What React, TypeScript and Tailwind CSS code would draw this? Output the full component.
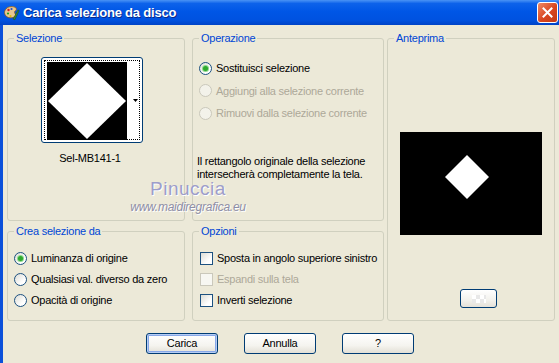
import clsx from "clsx";

const font = "font-['Liberation_Sans',Arial,sans-serif]";

const Radio = ({ label, checked, disabled, h }: { label: string; checked?: boolean; disabled?: boolean; h: string }) => (
  <div className={clsx("flex items-center", h)}>
    <span
      className={clsx(
        "w-[13px] h-[13px] rounded-full border flex items-center justify-center shrink-0",
        disabled ? "border-[#cac8bb] bg-[#f3f2ea]" : "border-[#1c5180] bg-[linear-gradient(135deg,#dcdcd5,#ffffff_70%)]"
      )}
    >
      {checked && <span className="w-[5px] h-[5px] rounded-full bg-[#2fa92f] shadow-[0_0_0_1px_#8fd98f]" />}
    </span>
    <span className={clsx("ml-[4px] whitespace-nowrap", disabled ? "text-[#aca899]" : "text-black")}>{label}</span>
  </div>
);

const Check = ({ label, disabled }: { label: string; disabled?: boolean }) => (
  <div className="flex items-center h-[21px]">
    <span
      className={clsx(
        "w-[13px] h-[13px] border shrink-0",
        disabled ? "border-[#cac8bb] bg-[#f7f7f2]" : "border-[#1c5180] bg-[linear-gradient(135deg,#dcdcd5,#ffffff_70%)]"
      )}
    />
    <span className={clsx("ml-[4px] whitespace-nowrap", disabled ? "text-[#aca899]" : "text-black")}>{label}</span>
  </div>
);

const Group = ({ title, className, children }: { title: string; className: string; children?: React.ReactNode }) => (
  <fieldset className={clsx("border border-[#d0d0bf] rounded-[3px]", className)}>
    <legend className="ml-[6px] px-[2px] text-[#0046d5] leading-[13px]">{title}</legend>
    {children}
  </fieldset>
);

const XpButton = ({ label, isDefault }: { label: string; isDefault?: boolean }) => (
  <button
    className={clsx(
      "w-[72px] h-[21px] rounded-[3px] border border-[#003c74] text-black bg-[linear-gradient(180deg,#ffffff_0%,#f5f4ef_60%,#e3e0d6_100%)] leading-none",
      isDefault && "shadow-[inset_0_0_0_1px_#b6cdf4,inset_0_0_0_2px_#88a8e8]"
    )}
  >
    {label}
  </button>
);

const PaletteIcon = () => (
  <svg width="16" height="16" viewBox="0 0 16 16">
    <path d="M2 4c2-3 8-3 10-1 1 1 0 3-1 3-1 1 0 3 1 4-1 3-7 4-10 1C0 9 0 6 2 4z" fill="#e8c890" stroke="#8a5a20" strokeWidth="0.8" />
    <circle cx="4.5" cy="5" r="1.2" fill="#d02020" />
    <circle cx="7.5" cy="4" r="1.1" fill="#2050d0" />
    <circle cx="4" cy="8.5" r="1.1" fill="#20a020" />
    <circle cx="6.5" cy="11" r="1.1" fill="#e0c000" />
    <path d="M9 14l5-9 1.2.6-4.4 9.2z" fill="#3a8a30" stroke="#1a4a10" strokeWidth="0.5" />
  </svg>
);

export default function App() {
  return (
    <div className={clsx("w-[559px] h-[363px] overflow-hidden relative bg-[#ece9d8] flex flex-col text-[11px] tracking-[-0.25px]", font)}>
      {/* title bar */}
      <div className="h-[25px] shrink-0 flex items-center bg-[linear-gradient(180deg,#4a93f5_0%,#0d62ea_14%,#0056e6_45%,#0052e0_80%,#0043c6_100%)]">
        <div className="ml-[4px]">
          <PaletteIcon />
        </div>
        <span className="ml-[3px] text-white font-bold text-[13px] tracking-[-0.2px] [text-shadow:1px_1px_0_#0a2a8a]">
          Carica selezione da disco
        </span>
        <div className="ml-auto mr-[1px] w-[21px] h-[21px] rounded-[3px] border border-white bg-[linear-gradient(135deg,#f08a66,#d8451f_55%,#c23a14)] flex items-center justify-center">
          <svg width="11" height="11" viewBox="0 0 11 11">
            <path d="M1.5 1.5l8 8M9.5 1.5l-8 8" stroke="white" strokeWidth="2" strokeLinecap="square" />
          </svg>
        </div>
      </div>

      <div className="flex-1 border-l-[3px] border-[#0b50da] pt-[7px] pl-[4px] flex flex-col">
        <div className="flex">
          <div className="w-[178px] flex flex-col">
            <Group title="Selezione" className="h-[189px]">
              <div className="mt-[12px] ml-[33px] w-[102px] h-[86px] rounded-[3px] border border-[#003c74] bg-white p-[2px]">
                <div className="w-full h-full border border-dotted border-black flex">
                  <svg width="80" height="78" viewBox="0 0 80 78" className="mt-[1px] ml-[2px] block">
                    <rect width="80" height="78" fill="black" />
                    <polygon points="40,1 79,39 40,77 1,39" fill="white" />
                  </svg>
                  <div className="flex-1 flex items-center justify-end pr-[1px]">
                    <svg width="5" height="3" viewBox="0 0 5 3">
                      <polygon points="0,0 5,0 2.5,3" fill="black" />
                    </svg>
                  </div>
                </div>
              </div>
              <div className="mt-[9px] ml-[31px] w-[102px] text-center leading-[13px]">Sel-MB141-1</div>
            </Group>
            <Group title="Crea selezione da" className="h-[96px] mt-[4px]">
              <div className="mt-[10px] pl-[6px]">
                <Radio h="h-[21px]" label="Luminanza di origine" checked />
                <Radio h="h-[21px]" label="Qualsiasi val. diverso da zero" />
                <Radio h="h-[21px]" label="Opacità di origine" />
              </div>
            </Group>
          </div>

          <div className="w-[192px] ml-[7px] flex flex-col">
            <Group title="Operazione" className="h-[189px]">
              <div className="mt-[12px] pl-[6px]">
                <Radio h="h-[22.5px]" label="Sostituisci selezione" checked />
                <Radio h="h-[22.5px]" label="Aggiungi alla selezione corrente" disabled />
                <Radio h="h-[22.5px]" label="Rimuovi dalla selezione corrente" disabled />
              </div>
              <p className="mt-[30px] pl-[4px] leading-[13px]">
                Il rettangolo originale della selezione
                <br />
                intersecherà completamente la tela.
              </p>
            </Group>
            <Group title="Opzioni" className="h-[96px] mt-[4px]">
              <div className="mt-[10px] pl-[7px]">
                <Check label="Sposta in angolo superiore sinistro" />
                <Check label="Espandi sulla tela" disabled />
                <Check label="Inverti selezione" />
              </div>
            </Group>
          </div>

          <div className="w-[168px] ml-[3px]">
            <Group title="Anteprima" className="h-[289px]">
              <svg width="142" height="103" viewBox="0 0 142 103" className="block mt-[87px] ml-[12px]">
                <rect width="142" height="103" fill="black" />
                <polygon points="67,23 89,45 67,67 45,45" fill="white" />
              </svg>
              <div className="mt-[54px] ml-[72px] w-[37px] h-[19px] rounded-[3px] border border-[#003c74] bg-[linear-gradient(180deg,#ffffff,#f2f1ec_60%,#e4e1d8)] flex items-center justify-center">
                <div className="w-[14px] h-[8px] bg-[conic-gradient(#e8e8e8_25%,#ffffff_0_50%,#e8e8e8_0_75%,#ffffff_0)] bg-[length:8px_8px]" />
              </div>
            </Group>
          </div>
        </div>

        <div className="mt-[12px] pl-[139px] flex gap-[26px]">
          <XpButton label="Carica" isDefault />
          <XpButton label="Annulla" />
          <XpButton label="?" />
        </div>
      </div>

      {/* watermark */}
      <div className="absolute left-[125px] top-[178px] w-[126px] flex flex-col items-center pointer-events-none">
        <span className="text-[19px] leading-[22px] text-[#9d9dca] tracking-[0.5px] [text-shadow:1px_1px_0_#ffffff]">Pinuccia</span>
        <span className="text-[12px] leading-[14px] italic text-[#8e8ea6] [text-shadow:1px_1px_0_#ffffff]">www.maidiregrafica.eu</span>
      </div>
    </div>
  );
}
